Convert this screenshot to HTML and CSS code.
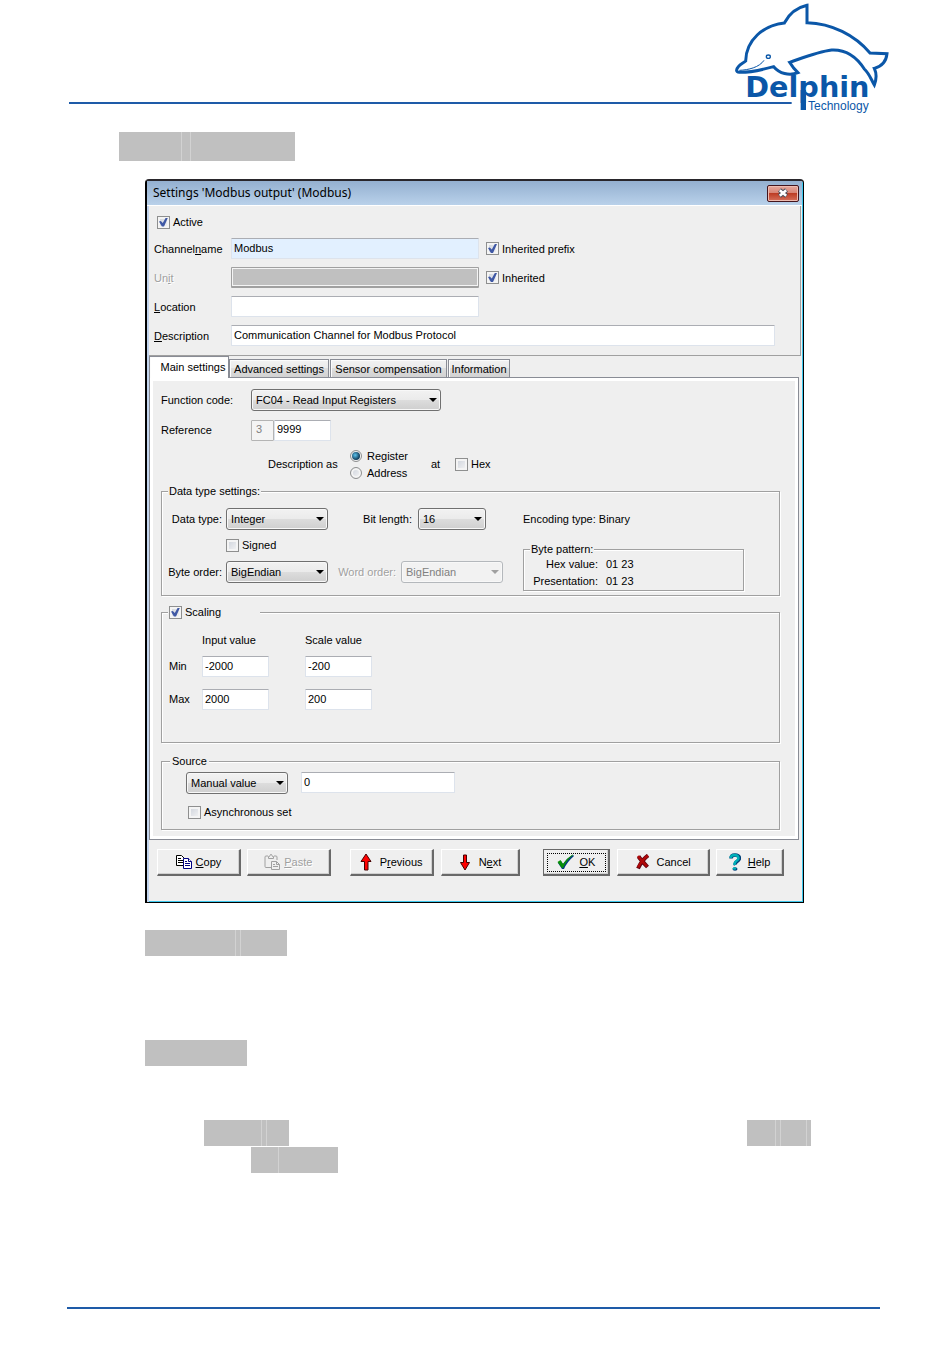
FILE: index.html
```html
<!DOCTYPE html>
<html lang="en">
<head>
<meta charset="utf-8">
<title>Delphin Technology - Modbus output settings</title>
<link rel="stylesheet" href="styles.css">
</head>
<body>
<header class="page-header">
  <div class="header-rule"></div>
  <svg class="logo" viewBox="0 0 540 360" role="img" aria-label="Delphin Technology">
    <path d="M0 309H215" stroke="#1e5ba8" stroke-width="6"/>
    <path class="dolphin" d="M77 183C78 120 130 76 193 69C207 42 230 23 261 16V68C335 70 405 105 450 159L501 161C499 181 487 199 463 205C471 222 469 239 463 255C455 242 449 222 433 207C408 168 375 148 335 150C295 155 255 171 209 187L221 204L234 218C207 229 178 220 161 200C128 209 93 218 58 217C47 216 48 208 55 200C62 191 71 189 77 183Z"/>
    <path d="M58 211C85 210 118 202 132 181" fill="none" stroke="#0b57a8" stroke-width="3"/>
    <ellipse cx="145" cy="170" rx="6" ry="5" fill="#fff" stroke="#0b57a8" stroke-width="4"/>
    <text class="logo-name" x="76" y="290">Delphin</text>
    <rect x="242" y="270" width="16" height="60" fill="#0b57a8"/>
    <text class="logo-sub" x="264" y="331">Technology</text>
  </svg>
</header>

<main class="page">
  <div class="mark mark-title"><i></i><i></i><i></i></div>

  <form class="dialog" onsubmit="return false">
    <div class="titlebar">
      <h1>Settings 'Modbus output' (Modbus)</h1>
      <button type="button" class="close" aria-label="Close">
        <svg viewBox="0 0 12 10" width="12" height="10"><path d="M2.500 2L9.500 8M9.500 2L2.500 8" stroke="#4c4f5c" stroke-width="4.500"/><path d="M2.800 2.200L9.200 7.800M9.200 2.200L2.800 7.800" stroke="#fff" stroke-width="2.500"/></svg>
      </button>
    </div>

    <section class="general">
      <label class="check active"><input type="checkbox" checked>Active</label>
      <div class="fields">
        <label for="name">Channel<u>n</u>ame</label>
        <input id="name" class="text focus" type="text" value="Modbus">
        <label class="check"><input type="checkbox" checked>Inherited prefix</label>
        <label for="unit" class="disabled">Un<u>i</u>t</label>
        <input id="unit" class="text unit" type="text" disabled>
        <label class="check"><input type="checkbox" checked>Inherited</label>
        <label for="location"><u>L</u>ocation</label>
        <input id="location" class="text" type="text">
        <span></span>
        <label for="description"><u>D</u>escription</label>
        <input id="description" class="text wide" type="text" value="Communication Channel for Modbus Protocol">
      </div>
    </section>

    <div class="tabs" role="tablist">
      <button type="button" role="tab" aria-selected="true" class="tab current">Main settings</button>
      <button type="button" role="tab" class="tab advanced">Advanced settings</button>
      <button type="button" role="tab" class="tab sensor">Sensor compensation</button>
      <button type="button" role="tab" class="tab info">Information</button>
    </div>

    <section class="panel">
      <div class="row">
        <label class="lead" for="fc">Function code:</label>
        <span class="select w190"><select id="fc"><option>FC04 - Read Input Registers</option></select></span>
      </div>
      <div class="row reference">
        <label class="lead" for="ref">Reference</label>
        <input class="text prefix" type="text" value="3" disabled aria-label="Reference prefix">
        <input id="ref" class="text number" type="text" value="9999">
      </div>
      <div class="row describe">
        <span class="describe-as">Description as</span>
        <div class="radios">
          <label class="check"><input type="radio" name="as" checked>Register</label>
          <label class="check"><input type="radio" name="as">Address</label>
        </div>
        <span class="at">at</span>
        <label class="check"><input type="checkbox">Hex</label>
      </div>

      <fieldset class="group datatype">
        <legend>Data type settings:</legend>
        <div class="type-left">
          <div class="row">
            <label class="short" for="dt">Data type:</label>
            <span class="select w102"><select id="dt"><option>Integer</option></select></span>
            <label class="bit" for="bl">Bit length:</label>
            <span class="select w68"><select id="bl"><option>16</option></select></span>
          </div>
          <label class="check signed"><input type="checkbox">Signed</label>
          <div class="row">
            <label class="short" for="bo">Byte order:</label>
            <span class="select w102"><select id="bo"><option>BigEndian</option></select></span>
            <label class="word disabled" for="wo">Word order:</label>
            <span class="select w102 off"><select id="wo" disabled><option>BigEndian</option></select></span>
          </div>
        </div>
        <div class="type-right">
          <p class="encoding">Encoding type: Binary</p>
          <fieldset class="group pattern">
            <legend>Byte pattern:</legend>
            <dl>
              <dt>Hex value:</dt><dd>01 23</dd>
              <dt>Presentation:</dt><dd>01 23</dd>
            </dl>
          </fieldset>
        </div>
      </fieldset>

      <fieldset class="group scaling">
        <legend><label class="check"><input type="checkbox" checked>Scaling</label></legend>
        <table>
          <thead><tr><td></td><th scope="col">Input value</th><th scope="col">Scale value</th></tr></thead>
          <tbody>
            <tr><th scope="row">Min</th><td><input class="text" type="text" value="-2000" aria-label="Min input value"></td><td><input class="text" type="text" value="-200" aria-label="Min scale value"></td></tr>
            <tr><th scope="row">Max</th><td><input class="text" type="text" value="2000" aria-label="Max input value"></td><td><input class="text" type="text" value="200" aria-label="Max scale value"></td></tr>
          </tbody>
        </table>
      </fieldset>

      <fieldset class="group source">
        <legend>Source</legend>
        <div class="row">
          <span class="select w102"><select aria-label="Source"><option>Manual value</option></select></span>
          <input class="text" type="text" value="0" aria-label="Manual value">
        </div>
        <label class="check"><input type="checkbox">Asynchronous set</label>
      </fieldset>
    </section>

    <div class="actions">
      <button type="button" class="btn copy">
        <svg viewBox="0 0 17 14" width="17" height="14" fill="#fff"><path d="M.5.500h5l3 3v7h-8z" stroke="#000"/><path d="M2 3.500h3M2 5.500h5M2 7.500h5" stroke="#000"/><path d="M7.500 3.500h5l3 3v7h-8z" stroke="#000080"/><path d="M12.500 3.500v3h3M9 6.500h2M9 8.500h5M9 10.500h5" stroke="#000080"/></svg>
        <span><u>C</u>opy</span></button>
      <button type="button" class="btn paste" disabled>
        <svg viewBox="0 0 17 16" width="17" height="16" fill="none" stroke="#a0a0a0"><path d="M7 13.500H2Q1 13.500 1 12.500V3Q1 2 2 2h2M10 2h2q1 0 1 1v3M4.500 4.500v-2h1l1-2h1l1 2h1v2z"/><path d="M7.500 7.500h5l3 3v5h-8z" fill="#efefef"/><path d="M12.500 7.500v3h3M9 10.500h2M9 12.500h5"/></svg>
        <span><u>P</u>aste</span></button>
      <button type="button" class="btn previous">
        <svg viewBox="0 0 12 18" width="12" height="18"><path d="M6 1L11 8.500H8V17H4.500V8.500H1z" fill="#f00" stroke="#400"/></svg>
        <span>P<u>r</u>evious</span></button>
      <button type="button" class="btn next">
        <svg viewBox="0 0 12 18" width="12" height="18"><path d="M6 17L1.500 9.500H4.500V2H7.500V9.500H10.500z" fill="#f00" stroke="#400"/></svg>
        <span>N<u>e</u>xt</span></button>
      <button type="button" class="btn ok">
        <svg viewBox="0 0 17 16" width="17" height="16"><path d="M1 9l3-2 2 3Q10 4 16 1L17 2Q10 8 7 15H5z" fill="#003880"/><path d="M.5 8l3-2L6 10Q10 4 15.500.500L16 1Q10 6 6 14H5z" fill="#089008"/></svg>
        <span><u>O</u>K</span></button>
      <button type="button" class="btn cancel">
        <svg viewBox="0 0 14 16" width="14" height="16"><path d="M2.500 2.500Q5 6 11.500 13M12 1.500Q6 6 2 14.500" fill="none" stroke="#600010" stroke-width="4"/><path d="M2 2Q5 6 11 12.500M12 1.500Q6 6 2 13.500" fill="none" stroke="#b00808" stroke-width="2.500"/></svg>
        <span>Cancel</span></button>
      <button type="button" class="btn help">
        <svg viewBox="0 0 12 18" width="12" height="18"><path d="M2 5.500Q2 2 6 2T10.500 5Q10.500 7 8 8.500T6.500 12" fill="none" stroke="#003f78" stroke-width="3.500"/><path d="M1.500 5Q2 2 5.500 2T9.500 5Q9.500 7 7.500 8T5.500 12" fill="none" stroke="#00b0b8" stroke-width="2.500"/><ellipse cx="6" cy="16" rx="2.500" ry="1.800" fill="#003f78"/><ellipse cx="5.500" cy="15.500" rx="1.800" ry="1.300" fill="#00b0b8"/></svg>
        <span><u>H</u>elp</span></button>
    </div>
  </form>

  <div class="mark mark-function"><i></i><i></i><i></i></div>
  <div class="mark mark-reference"><i></i></div>
  <div class="mark-line">
    <div class="mark mark-a"><i></i><i></i><i></i></div>
    <div class="mark mark-b"><i></i><i></i><i></i><i></i></div>
  </div>
  <div class="mark mark-c"><i></i><i></i></div>
</main>
<footer class="page-footer"></footer>
</body>
</html>
```
FILE: styles.css
```css
* { box-sizing: border-box; }
body {
  margin: 0;
  background: #fff;
  color: #000;
  font: 11px/14px "Liberation Sans", Arial, sans-serif;
}
input, select, button { font: inherit; color: inherit; margin: 0; }

/* Page frame */
.page-header { display: flex; padding: 0 50px 0 69px; }
.header-rule { flex: 1; height: 2px; margin-top: 102px; background: #1e5ba8; }
.logo { display: block; width: 180px; height: 120px; }
.dolphin { fill: #fff; stroke: #0b57a8; stroke-width: 9; }
.logo-name { font: bold 86px "DejaVu Sans", sans-serif; fill: #0b57a8; }
.logo-sub { font: 36px "Liberation Sans", sans-serif; fill: #0b57a8; }
.page { padding: 12px 146px 0 145px; }
.page-footer { height: 2px; margin: 134px 70px 0 67px; background: #1e5ba8; }

/* Grey blocks */
.mark { display: flex; gap: 1px; width: max-content; height: 26px; background: #d2d2d2; }
.mark i { background: #c0c0c0; }
.mark-title { height: 29px; margin: 0 0 18px -26px; }
.mark-title i:nth-child(1) { width: 62px; }
.mark-title i:nth-child(2) { width: 8px; }
.mark-title i:nth-child(3) { width: 104px; }
.mark-function { margin-top: 27px; }
.mark-function i:nth-child(1) { width: 90px; }
.mark-function i:nth-child(2) { width: 4px; }
.mark-function i:nth-child(3) { width: 46px; }
.mark-reference { margin-top: 84px; }
.mark-reference i { width: 102px; }
.mark-line { display: flex; justify-content: space-between; margin: 54px -7px 0 59px; }
.mark-a i:nth-child(1) { width: 57px; }
.mark-a i:nth-child(2) { width: 4px; }
.mark-a i:nth-child(3) { width: 22px; }
.mark-b i:nth-child(1) { width: 28px; }
.mark-b i:nth-child(2) { width: 4px; }
.mark-b i:nth-child(3) { width: 25px; }
.mark-b i:nth-child(4) { width: 4px; }
.mark-c { margin: 1px 0 0 106px; }
.mark-c i:nth-child(1) { width: 27px; }
.mark-c i:nth-child(2) { width: 59px; }

/* Dialog window */
.dialog {
  border: 2px solid #000;
  border-top-color: #29262b;
  border-right-width: 1px;
  border-bottom-width: 1px;
  border-radius: 4px 4px 0 0;
  background: #efefef;
  box-shadow: inset 2px 0 #c3d5ee, inset -1px -1px #3cc8ee;
}
.titlebar {
  display: flex;
  align-items: center;
  justify-content: space-between;
  height: 25px;
  padding: 0 3px 0 6px;
  margin-right: 1px;
  border-bottom: 1px solid #fff;
  background: linear-gradient(#94b0d0, #b9d1ea);
}
.titlebar h1 { margin: 0; font: 12px/16px "Noto Sans", "Open Sans", sans-serif; }
.close {
  display: grid;
  place-items: center;
  width: 32px;
  height: 17px;
  padding: 0;
  border: 1px solid #43141c;
  border-radius: 2px;
  background: linear-gradient(#e6a89c 0, #d88476 45%, #bd3d25 50%, #d6705c);
  box-shadow: inset 0 0 0 1px #eebbb0;
}
.general {
  margin: 0 2px;
  padding: 9px 25px 9px 4px;
  border-right: 1px solid #a0a0a0;
  border-bottom: 1px solid #a0a0a0;
}
.fields {
  display: grid;
  grid-template-columns: 78px 248px 1fr;
  grid-auto-rows: 21px;
  row-gap: 8px;
  align-items: center;
  margin-top: 9px;
}
.fields > label:not(.check) { padding: 1px 0 0 1px; }
.fields .check { margin-left: 7px; }
.fields .wide { grid-column: 2 / 4; }
.active { margin-left: 4px; }
.disabled { color: #a0a0a0; text-shadow: 1px 1px #fff; }

/* Controls */
.text {
  width: 100%;
  height: 21px;
  padding: 0 2px 2px;
  border: 1px solid #dde3ec;
  border-top-color: #abadb3;
  border-radius: 1px;
  background: #fff;
}
.focus { background: #e2f0ff; }
.unit { border: 1px solid #a0a0a0; border-bottom-width: 2px; background: #c0c0c0; box-shadow: inset 0 0 0 1px #f4f4f4; }
.check { display: flex; align-items: center; gap: 3px; height: 14px; width: max-content; }
.check input {
  appearance: none;
  display: grid;
  place-items: center;
  flex: none;
  width: 13px;
  height: 13px;
  border: 1px solid #8e8f8f;
  background: linear-gradient(135deg, #ccd1da, #f6f6f6);
  box-shadow: inset 0 0 0 2px #f4f4f4;
}
.check input[type="checkbox"]:checked::after {
  content: "";
  width: 9px;
  height: 9px;
  background: #3f58a5;
  clip-path: polygon(0 45%, 20% 38%, 42% 62%, 76% 0, 100% 0, 56% 100%, 32% 100%);
}
.check input[type="radio"] { width: 12px; height: 12px; border-radius: 50%; }
.check input[type="radio"]:checked::after {
  content: "";
  width: 8px;
  height: 8px;
  border-radius: 50%;
  background: radial-gradient(circle at 40% 40%, #5cc4ee, #12405f 65%);
}
.select { position: relative; display: block; }
.select select {
  appearance: none;
  display: block;
  width: 100%;
  height: 22px;
  padding: 0 18px 1px 4px;
  border: 1px solid #707070;
  border-radius: 3px;
  background: linear-gradient(#f2f2f2, #ebebeb 48%, #dddddd 50%, #cfcfcf);
  box-shadow: inset 0 0 0 1px #f8f8f8;
}
.select::after {
  content: "";
  position: absolute;
  top: 9px;
  right: 4px;
  border: solid transparent;
  border-width: 4px 4px 0;
  border-top-color: #000;
}
.select.off select { border-color: #b4b8bc; background: #f2f2f2; color: #808080; opacity: 1; }
.select.off::after { border-top-color: #a0a0a0; }
.w190 { width: 190px; }
.w102 { width: 102px; }
.w68 { width: 68px; }

/* Tabs */
.tabs { display: flex; align-items: flex-end; gap: 1px; height: 21px; margin-left: 2px; }
.tab {
  height: 18px;
  padding: 0;
  border: 1px solid #898c95;
  border-bottom: 0;
  background: linear-gradient(#f2f2f2, #ebebeb 48%, #dddddd 50%, #d2d2d2);
  box-shadow: inset 1px 1px #fcfcfc;
  white-space: nowrap;
}
.tab.current { width: 80px; height: 22px; margin: 0 -1px -1px 0; padding: 0 0 2px 8px; background: #fff; position: relative; z-index: 1; }
.advanced { width: 100px; }
.sensor { width: 117px; }
.info { width: 62px; }
.panel {
  margin: 0 4px 0 2px;
  padding: 11px 18px 9px 11px;
  border: 1px solid #898c95;
  background: #efefef;
  box-shadow: inset 0 0 0 3px #fff;
}
.row { display: flex; align-items: center; height: 22px; }
.lead { width: 90px; }
.reference { margin-top: 8px; }
.prefix { width: 23px; border-color: #b4b4b4; background: #f4f4f4; color: #808080; padding-left: 4px; }
.number { width: 57px; }
.describe { height: 34px; margin: 6px 0 3px 107px; }
.describe-as { width: 82px; }
.radios { width: 81px; }
.radios .check { height: 17px; gap: 5px; }
.at { width: 24px; }

/* Group boxes */
.group {
  min-width: 0;
  margin: 0;
  padding: 0;
  border: 1px solid #a0a0a0;
  box-shadow: 1px 1px #fff, inset 1px 1px #fff;
}
.group legend { height: 14px; margin-left: 6px; padding: 0 1px; background: #efefef; }
.datatype { display: grid; grid-template-columns: 361px 1fr; }
.type-left { padding: 10px 0 12px; }
.short { width: 64px; padding-right: 4px; text-align: right; }
.bit { width: 90px; padding-right: 6px; text-align: right; }
.word { width: 73px; padding-right: 5px; text-align: right; }
.signed { margin: 8px 0 9px 64px; }
.encoding { margin: 14px 0 16px; }
.pattern { width: 221px; }
.pattern dl { display: grid; grid-template-columns: 74px 1fr; column-gap: 8px; margin: 0; line-height: 17px; }
.pattern dt { text-align: right; }
.pattern dd { margin: 0; }
.scaling { margin-top: 9px; padding: 14px 0 20px 7px; }
.scaling legend { width: 92px; margin-left: -1px; }
.scaling table { border-collapse: collapse; }
.scaling th, .scaling td { padding: 0; font-weight: normal; text-align: left; }
.scaling thead th { width: 103px; height: 14px; }
.scaling tbody th { width: 33px; }
.scaling thead tr { height: 23px; vertical-align: top; }
.scaling tbody tr { height: 33px; vertical-align: top; }
.scaling tbody th { padding-top: 3px; }
.scaling .text { width: 67px; display: block; }
.source { margin-top: 11px; padding: 4px 0 10px 24px; }
.source legend { margin-left: -16px; padding: 0 2px; }
.source .row { align-items: flex-start; }
.source .text { width: 154px; margin-left: 13px; }
.source > .check { margin: 11px 0 0 2px; }

/* Action buttons */
.actions { display: flex; padding: 9px 19px 26px 10px; }
.btn {
  display: flex;
  align-items: center;
  justify-content: center;
  gap: 3px;
  height: 27px;
  padding: 0;
  border: solid;
  border-width: 1px 2px 2px 1px;
  border-color: #fff #696969 #696969 #fff;
  background: #efefef;
  box-shadow: inset -1px -1px #d0d0d0;
}
.copy { width: 84px; }
.paste { width: 84px; margin-left: 6px; color: #a0a0a0; text-shadow: 1px 1px #fff; }
.previous { width: 84px; margin-left: 19px; gap: 8px; }
.next { width: 80px; margin-left: 7px; gap: 8px; }
.ok { width: 67px; margin-left: 23px; gap: 5px; border: 1px solid #696969; border-right-width: 2px; border-bottom-width: 2px; outline: 1px dotted #000; outline-offset: -5px; }
.cancel { width: 93px; margin-left: 7px; gap: 7px; }
.help { width: 68px; margin-left: 6px; gap: 7px; }
```
